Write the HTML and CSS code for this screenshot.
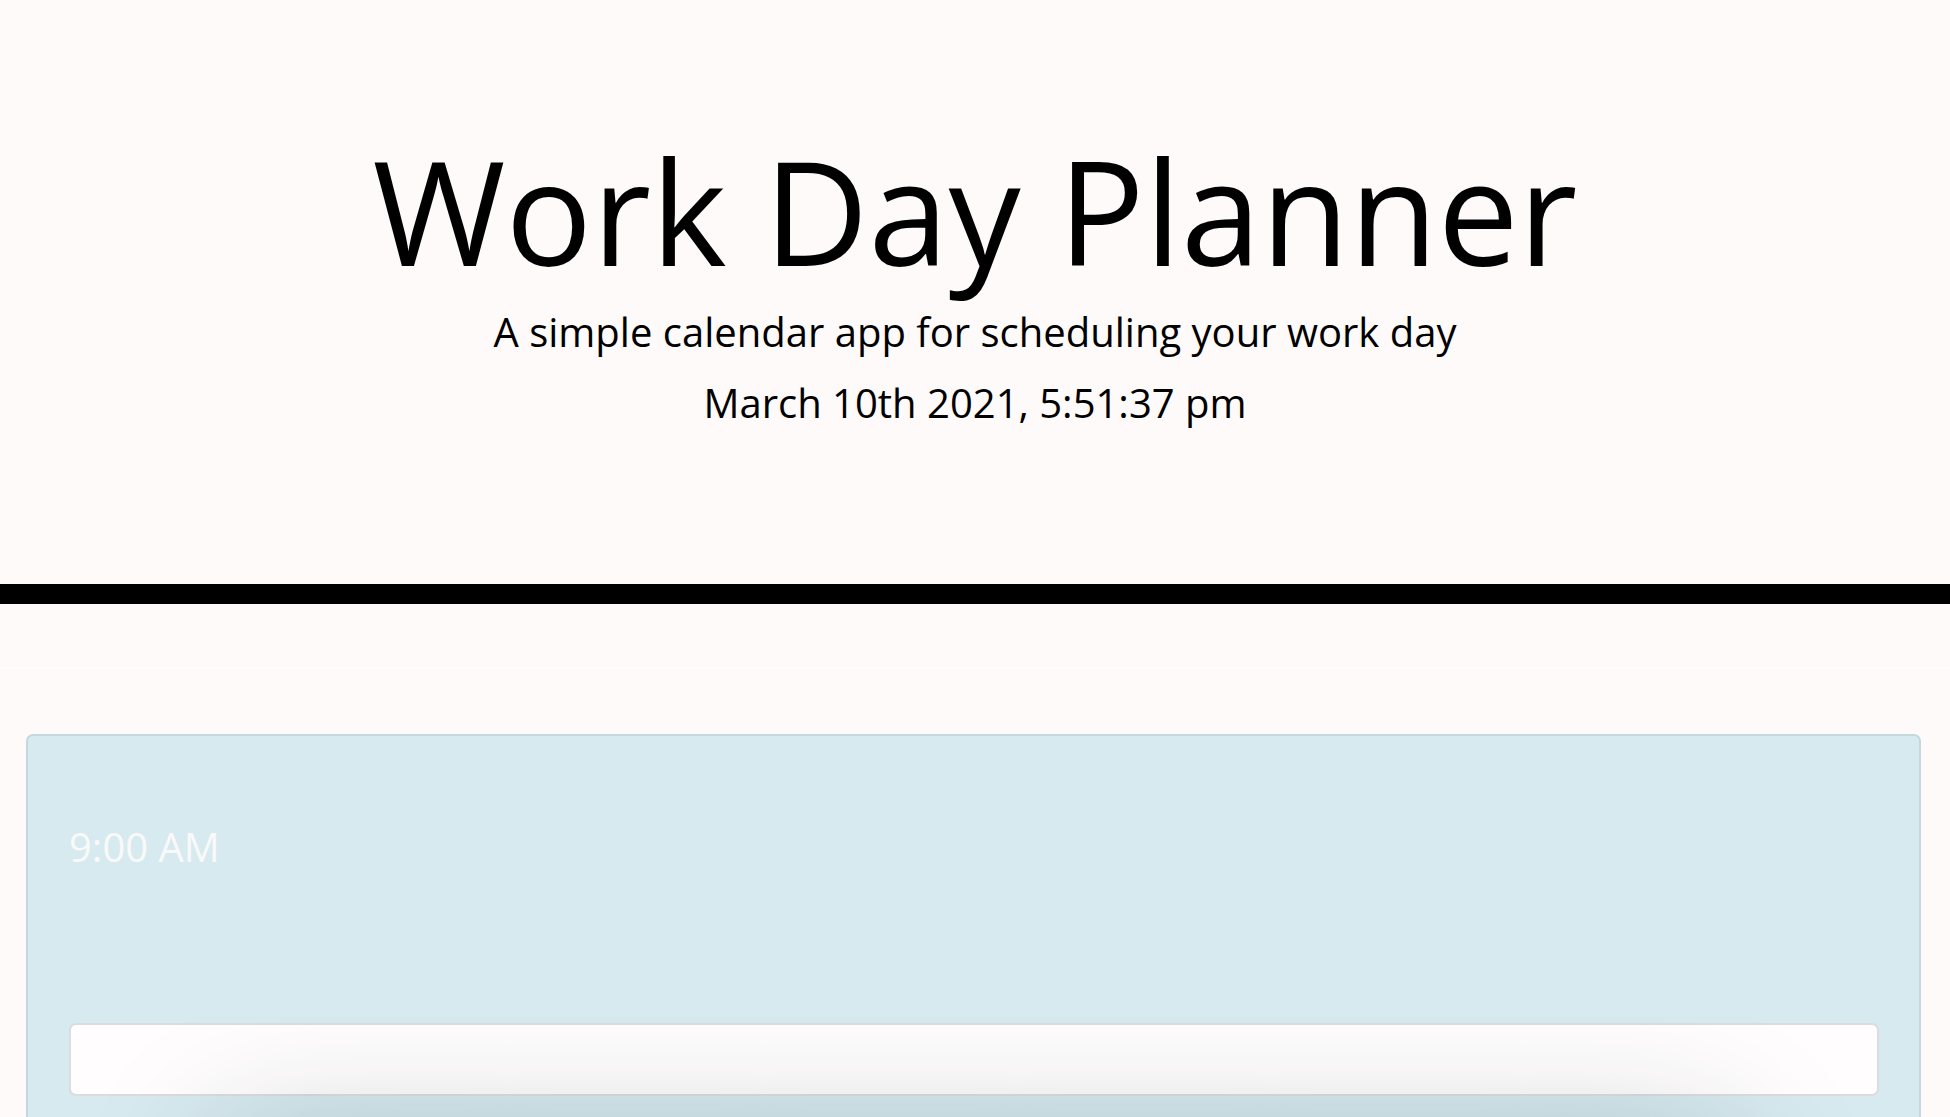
FILE: index.html
```html
<!DOCTYPE html>
<html lang="en">
<head>
<meta charset="utf-8">
<title>Work Day Planner</title>
<link rel="stylesheet" href="styles.css">
</head>
<body>
<header class="jumbotron">
  <h1 class="title">Work Day Planner</h1>
  <p class="lead">A simple calendar app for scheduling your work day</p>
  <p class="current-day">March 10th 2021, 5:51:37 pm</p>
</header>
<div class="divider"></div>
<div class="spacer"></div>
<main class="planner">
  <section class="time-block">
    <div class="hour">9:00 AM</div>
    <input class="description" type="text" aria-label="9:00 AM task">
    <div class="blob"></div>
  </section>
</main>
</body>
</html>
```
FILE: styles.css
```css
html, body {
  margin: 0;
  padding: 0;
  background: #fefaf9;
  overflow: hidden;
}
body {
  font-family: "Open Sans", "Noto Sans", sans-serif;
  color: #000;
}
.jumbotron {
  text-align: center;
  padding: 122px 0 0;
  height: 463px;
  box-sizing: border-box;
}
.title {
  font-size: 144px;
  font-weight: 400;
  line-height: 176px;
  margin: 0;
}
.lead {
  font-size: 40px;
  line-height: 60px;
  margin: 4px 0 0;
}
.current-day {
  font-size: 40px;
  line-height: 60px;
  margin: 11px 0 0;
}
.divider {
  height: 20px;
  background: #000;
  margin-top: 121px;
}
.spacer {
  height: 63px;
  border-bottom: 2px solid #ffffff;
}
.planner {
  padding: 65px 29px 0 26px;
}
.time-block {
  position: relative;
  background: #d7eaef;
  border: 2px solid #c4d8de;
  border-radius: 7px;
  padding: 41px 40px 40px 41px;
  min-height: 400px;
}
.hour {
  color: #f9f9f9;
  font-size: 40px;
  line-height: 60px;
  margin-top: 40px;
}
.description {
  display: block;
  box-sizing: border-box;
  width: 100%;
  height: 73px;
  margin-top: 146px;
  border: 2px solid #dcdcdf;
  border-radius: 7px;
  background: #fffdfd;
  font-family: inherit;
}
.blob {
  position: absolute;
  left: 197px;
  right: 194px;
  top: 406px;
  height: 300px;
  box-shadow: 0 0 140px 0 rgba(30, 50, 60, 0.25);
}
```
